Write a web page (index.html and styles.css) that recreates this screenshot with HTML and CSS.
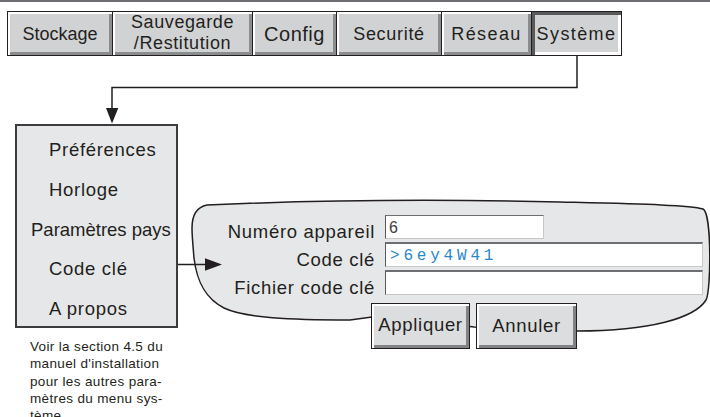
FILE: index.html
```html
<!DOCTYPE html>
<html lang="fr">
<head>
<meta charset="utf-8">
<title>Système – Code clé</title>
<link rel="stylesheet" href="styles.css">
</head>
<body>
<div class="topline"></div>
<nav class="tabs">
  <div class="tab tab-stockage">Stockage</div>
  <div class="tab tab-sauvegarde">Sauvegarde<br>/Restitution</div>
  <div class="tab tab-config">Config</div>
  <div class="tab tab-securite">Securité</div>
  <div class="tab tab-reseau">Réseau</div>
  <div class="tab tab-active">Système</div>
</nav>
<div class="diagram">
  <svg class="wires" width="710" height="361" viewBox="0 0 710 361" xmlns="http://www.w3.org/2000/svg">
    <g transform="translate(0,-56)">
      <path class="bubble" d="M 192 228 C 192 214, 197 207, 207 205 C 320 200, 440 199, 560 202 C 640 204, 690 205, 703 209 C 712 213, 711 292, 706 300 C 695 318, 650 331, 577 331 C 530 330, 490 328, 474 327 C 440 323, 400 318, 372 317 L 350 320 C 290 320, 245 318, 224 308 C 206 299, 197 283, 194 258 C 193 246, 192 236, 192 228 Z"/>
      <polyline class="wire" points="577,56 577,87.5 112,87.5 112,109"/>
      <polygon class="head" points="106,108 118.3,108 112,123.5"/>
      <line class="wire" x1="178" y1="264.5" x2="206" y2="264.5"/>
      <polygon class="head" points="205,258.3 205,270.7 222,264.5"/>
    </g>
  </svg>

  <div class="menu-col">
    <ul class="menu">
      <li>Préférences</li>
      <li>Horloge</li>
      <li class="menu-tight">Paramètres pays</li>
      <li>Code clé</li>
      <li>A propos</li>
    </ul>
    <p class="note">Voir la section 4.5 du<br>manuel d'installation<br>pour les autres para-<br>mètres du menu sys-<br>tème</p>
  </div>

  <div class="dialog">
    <div class="form">
      <span class="label">Numéro appareil</span>
      <div class="field field-short">6</div>
      <span class="label">Code clé</span>
      <div class="field field-code">&gt;6ey4W41</div>
      <span class="label">Fichier code clé</span>
      <div class="field"></div>
    </div>
    <div class="buttons">
      <div class="btn btn-apply">Appliquer</div>
      <div class="btn btn-cancel">Annuler</div>
    </div>
  </div>
</div>
</body>
</html>
```
FILE: styles.css
```css
html, body {
  margin: 0;
  padding: 0;
}

body {
  width: 710px;
  height: 417px;
  overflow: hidden;
  background: #fff;
  color: #231f20;
  font-family: "Liberation Sans", Arial, sans-serif;
}

.topline {
  height: 2px;
  background: #6d6e71;
}

/* ---------- tab bar ---------- */
.tabs {
  display: flex;
  margin: 9px 0 0 7px;
  height: 45px;
}

.tab {
  box-sizing: border-box;
  height: 45px;
  margin-left: -1px;
  border: 1px solid #231f20;
  background: #d1d2d4;
  box-shadow: inset 2px 2px 0 #fff, inset -3px -3px 0 #8a8c8e;
  display: flex;
  align-items: center;
  justify-content: center;
  text-align: center;
  font-size: 18px;
  line-height: 20px;
  letter-spacing: 0.5px;
}

.tab-stockage { margin-left: 0; width: 106px; letter-spacing: 0; }
.tab-sauvegarde { width: 141px; letter-spacing: 0.6px; line-height: 21px; padding-bottom: 1px; }
.tab-config { width: 85px; font-size: 20px; letter-spacing: 0.5px; }
.tab-securite { width: 106px; letter-spacing: 0.7px; }
.tab-reseau { width: 91px; letter-spacing: 1.4px; }

.tab-active {
  width: 91px;
  letter-spacing: 1.4px;
  box-shadow: inset 3px 3px 0 #58595b, inset -3px -3px 0 #fff;
}

/* ---------- diagram canvas ---------- */
.diagram {
  position: relative;
  height: 361px;
}

.wires {
  position: absolute;
  left: 0;
  top: 0;
}

.wire {
  fill: none;
  stroke: #231f20;
  stroke-width: 1.5;
}

.head {
  fill: #231f20;
}

.bubble {
  fill: #e6e7e8;
  stroke: #231f20;
  stroke-width: 1.5;
}

/* ---------- left menu ---------- */
.menu-col {
  position: absolute;
  left: 15px;
  top: 68px;
}

.menu {
  box-sizing: border-box;
  width: 163px;
  height: 204px;
  margin: 0;
  padding: 4px 0 0 0;
  list-style: none;
  border: 2px solid #3c3c3e;
  background: #e6e7e8;
}

.menu li {
  padding-left: 32px;
  font-size: 18.5px;
  line-height: 39.75px;
  letter-spacing: 0.7px;
  white-space: nowrap;
}

.menu .menu-tight {
  padding-left: 14px;
  letter-spacing: 0;
}

.note {
  margin: 10px 0 0 0;
  padding-left: 15px;
  font-size: 13.5px;
  line-height: 17.3px;
  letter-spacing: 0.35px;
  white-space: nowrap;
}

/* ---------- dialog ---------- */
.dialog {
  position: absolute;
  left: 215px;
  top: 159px;
}

.form {
  display: grid;
  grid-template-columns: 160px 318px;
  grid-template-rows: 24px 25px 25px;
  column-gap: 10px;
  row-gap: 3px;
}

.label {
  align-self: end;
  text-align: right;
  font-size: 18.5px;
  line-height: 18px;
  letter-spacing: 0.7px;
  margin-bottom: -2px;
  white-space: nowrap;
}

.field {
  box-sizing: border-box;
  background: #fff;
  border-top: 2px solid #6d6e71;
  border-left: 1px solid #58595b;
  border-right: 1px solid #c7c8ca;
  border-bottom: 1px solid #c7c8ca;
  padding-left: 3px;
  display: flex;
  align-items: center;
  font-size: 16px;
  color: #404041;
}

.field-short {
  width: 159px;
  border-top-width: 1px;
  padding-top: 2px;
}

.field-code {
  font-family: "Liberation Mono", "Courier New", monospace;
  color: #2b87c8;
  letter-spacing: 3.8px;
  padding-left: 4px;
  padding-top: 2px;
}

.buttons {
  display: flex;
  gap: 6px;
  margin: 8px 0 0 156px;
}

.btn {
  box-sizing: border-box;
  height: 46px;
  width: 99px;
  border: 1px solid #231f20;
  background: #dcddde;
  box-shadow: inset 2px 2px 0 #fff, inset -3px -3px 0 #808285;
  display: flex;
  align-items: center;
  justify-content: center;
  font-size: 18.5px;
  letter-spacing: 0.7px;
}

.btn-apply {
  padding-bottom: 3px;
}

.btn-cancel {
  width: 101px;
}
```
